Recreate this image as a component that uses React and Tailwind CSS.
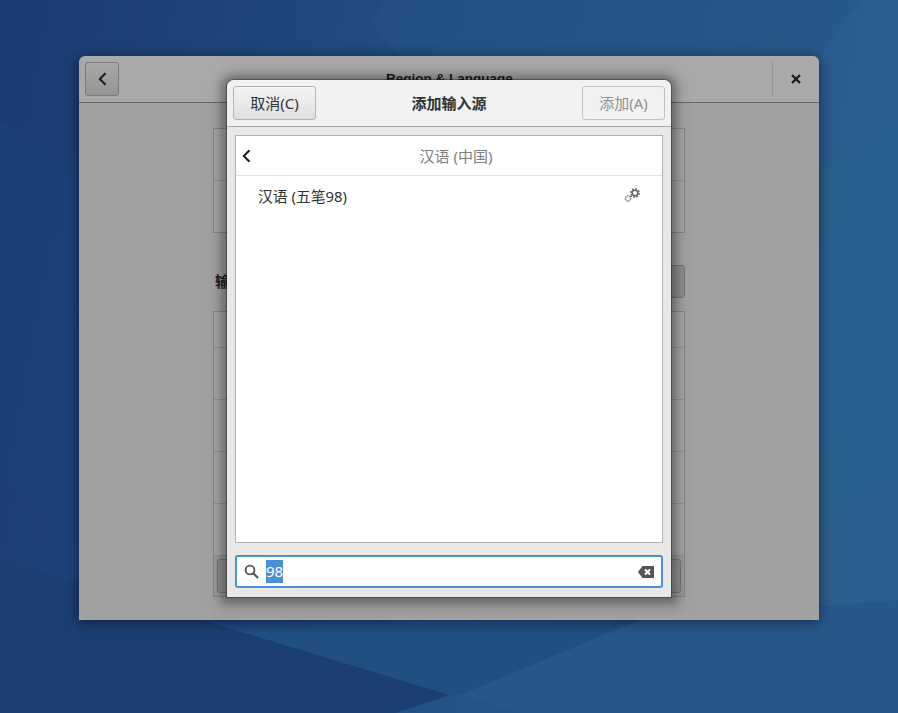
const font = { fontFamily: '"Noto Sans", "Noto Sans CJK SC", sans-serif' }

function Wallpaper() {
  return (
    <svg className="absolute inset-0 h-full w-full" viewBox="0 0 898 713" preserveAspectRatio="none">
      <defs>
        <linearGradient id="wall" x1="0" y1="0" x2="1" y2="0.15">
          <stop offset="0" stopColor="#1a3b71" />
          <stop offset="0.3" stopColor="#1e467e" />
          <stop offset="0.55" stopColor="#235084" />
          <stop offset="1" stopColor="#2b5f8f" />
        </linearGradient>
      </defs>
      <rect width="898" height="713" fill="url(#wall)" />
      <polygon points="370,22 400,56 820,56 860,0 385,0" fill="#265488" opacity="0.5" />
      <polygon points="0,560 235,630 450,695 395,713 0,713" fill="#1b3e73" />
      <polygon points="235,630 640,620 460,695 450,695" fill="#224f82" />
      <polygon points="460,695 640,620 898,600 898,713 520,713" fill="#28588a" />
      <polygon points="898,120 898,480 819,520 819,170" fill="#28608f" opacity="0.6" />
      <polygon points="0,120 79,180 79,520 0,480" fill="#1c4480" opacity="0.4" />
    </svg>
  )
}

function BackArrow({ className }) {
  return (
    <svg width="9" height="14" viewBox="0 0 9 14" fill="none" className={className}>
      <path d="M7.5 1.2 1.8 7l5.7 5.8" stroke="currentColor" strokeWidth="2" />
    </svg>
  )
}

function CloseIcon() {
  return (
    <svg width="10" height="10" viewBox="0 0 10 10" fill="none">
      <path d="M1 1l8 8M9 1l-8 8" stroke="#1c1c1c" strokeWidth="2.3" />
    </svg>
  )
}

function SearchIcon() {
  return (
    <svg width="15" height="15" viewBox="0 0 15 15" fill="none" stroke="#555">
      <circle cx="6" cy="6" r="4.4" strokeWidth="1.9" />
      <path d="M9.4 9.4 14 14" strokeWidth="2.2" />
    </svg>
  )
}

function GearsIcon() {
  return (
    <svg width="18" height="18" viewBox="0 0 18 18" fill="none" stroke="#666" className="mb-[2px]">
      <circle cx="11" cy="6" r="4" strokeWidth="1.8" strokeDasharray="1.7 1.4" />
      <circle cx="11" cy="6" r="2.8" strokeWidth="1.6" />
      <circle cx="4" cy="11.5" r="2.6" strokeWidth="1.6" stroke="#8c8c8c" strokeDasharray="1.5 0.7" />
      <path d="M8 8.8 6.3 10" strokeWidth="1.4" />
    </svg>
  )
}

function ClearIcon() {
  return (
    <svg width="16" height="12" viewBox="0 0 16 12">
      <path d="M4.5 0H16v12H4.5L0 6z" fill="#555" />
      <path d="M7 3.5l5 5M12 3.5l-5 5" stroke="#fff" strokeWidth="2" />
    </svg>
  )
}

function BackPanel() {
  return (
    <div className="flex flex-1 flex-col items-center bg-[#a1a1a1] pt-[25px]">
      <div className="flex h-[105px] w-[472px] flex-col border border-[#858585] bg-[#a5a5a5]">
        <div className="h-[52px] border-b border-[#929292]" />
      </div>
      <div className="mt-[32px] flex w-[472px] items-center justify-between">
        <span className="pl-[2px] text-[15px] font-bold text-[#222]">输入源</span>
        <div className="h-[33px] w-[34px] rounded-[3px] border border-[#777] bg-[#8f8f8f]" />
      </div>
      <div className="mt-[13px] flex w-[472px] flex-1 flex-col border border-b-0 border-[#858585] bg-[#a5a5a5]">
        <div className="h-[36px] border-b border-[#929292]" />
        <div className="h-[52px] border-b border-[#929292]" />
        <div className="h-[52px] border-b border-[#929292]" />
        <div className="h-[52px] border-b border-[#929292]" />
        <div className="h-[52px] border-b border-[#929292]" />
        <div className="flex justify-between border-b border-[#858585] bg-[#9b9b9b] px-[3px] py-[3px]">
          <div className="h-[34px] w-[30px] rounded-[3px] border border-[#777] bg-[#939393]" />
          <div className="h-[34px] w-[30px] rounded-[3px] border border-[#777] bg-[#939393]" />
        </div>
      </div>
      <div className="h-[23px]" />
    </div>
  )
}

function AddDialog() {
  return (
    <div className="absolute left-[148px] top-[24px] flex h-[517px] w-[444px] flex-col rounded-t-[7px] bg-[#e8e8e7] shadow-[0_0_0_1px_rgba(0,0,0,0.3),0_1px_7px_5px_rgba(0,0,0,0.2),0_1px_12px_9px_rgba(0,0,0,0.17)]">
      <div className="flex h-[47px] items-center justify-between rounded-t-[7px] border-b border-[#a9a9a6] bg-[#f1f1f1] px-[6px]">
        <button type="button" className="flex h-[34px] w-[83px] items-center justify-center rounded-[3px] border border-[#b3b3b0] bg-gradient-to-b from-[#f4f4f3] to-[#dfdfdd] text-[15px] text-[#2e3436]">
          取消(C)
        </button>
        <span className="text-[15px] font-bold text-[#2e3436]">添加输入源</span>
        <button type="button" className="flex h-[34px] w-[83px] items-center justify-center rounded-[3px] border border-[#c2c2bf] bg-[#f1f1f1] text-[15px] text-[#8f9293]">
          添加(A)
        </button>
      </div>

      <div className="flex flex-1 flex-col px-[8px] pb-[9px] pt-[8px]">
        <div className="flex-1 border border-[#b0b0ac] bg-white">
          <div className="relative flex h-[40px] items-center justify-center border-b border-[#e2e2e0] pl-[14px] pt-[1px]">
            <BackArrow className="absolute left-[6px] top-[13px] text-[#1a1a1a]" />
            <span className="text-[15px] text-[#7b7f80]">汉语 (中国)</span>
          </div>
          <div className="flex h-[41px] items-center justify-between pl-[22px] pr-[20px]">
            <span className="text-[14.8px] text-[#2e3436]">汉语 (五笔98)</span>
            <GearsIcon />
          </div>
        </div>

        <div className="mt-[12px] flex h-[33px] items-center rounded-[3px] border-2 border-[#4a90d9] bg-white pl-[7px] pr-[7px]">
          <SearchIcon />
          <span className="ml-[7px] bg-[#4a90d9] text-[15px] leading-[23px] text-white">98</span>
          <span className="flex-1" />
          <ClearIcon />
        </div>
      </div>
    </div>
  )
}

export default function App() {
  return (
    <div className="relative h-[713px] w-[898px] overflow-hidden" style={font}>
      <Wallpaper />
      <div className="relative pl-[79px] pt-[56px]">
        <div className="relative flex h-[564px] w-[740px] flex-col rounded-t-[6px] shadow-[0_2px_14px_rgba(0,0,0,0.5)]">
          <div className="relative flex h-[47px] items-center justify-between rounded-t-[6px] border-b border-[#666] bg-[#a9a9a9] pl-[6px]">
            <button type="button" className="flex h-[34px] w-[34px] items-center justify-center rounded-[3px] border border-[#7a7a7a] bg-gradient-to-b from-[#a8a8a8] to-[#959595] text-[#1c1c1c]">
              <BackArrow />
            </button>
            <span className="ml-[8px] pt-[1px] font-['Liberation_Sans'] text-[13.5px] font-bold text-[#1d1d1d]">Region &amp; Language</span>
            <div className="flex h-[34px] w-[47px] items-center justify-center border-l border-[#939393]">
              <CloseIcon />
            </div>
          </div>
          <BackPanel />
          <AddDialog />
        </div>
      </div>
    </div>
  )
}
